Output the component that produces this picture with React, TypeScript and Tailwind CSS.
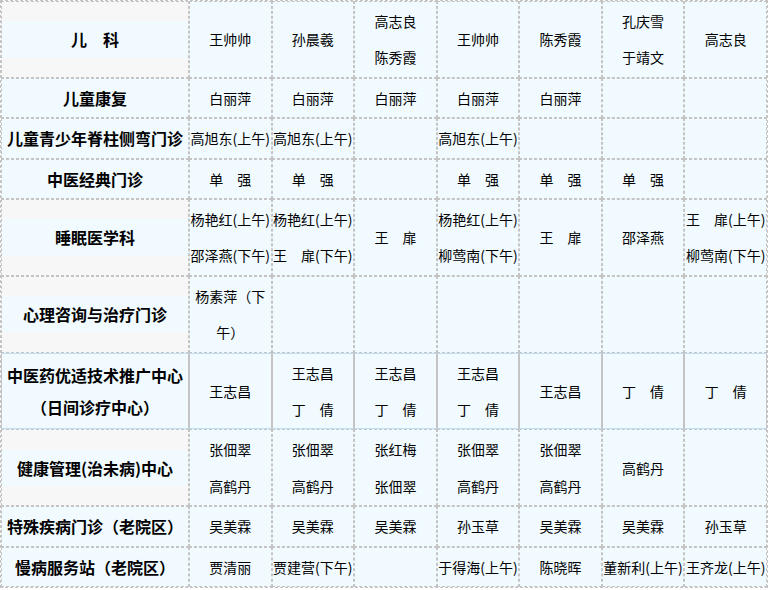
import React from "react";

type Row = {
  head: string;
  band: boolean; // first cell grey with light-blue band
  cells: string[][];
  special?: boolean;
};

const S = "　";

const rows: Row[] = [
  {
    head: `儿${S}科`,
    band: true,
    cells: [["王帅帅"], ["孙晨羲"], ["高志良", "陈秀霞"], ["王帅帅"], ["陈秀霞"], ["孔庆雪", "于靖文"], ["高志良"]],
  },
  {
    head: "儿童康复",
    band: false,
    cells: [["白丽萍"], ["白丽萍"], ["白丽萍"], ["白丽萍"], ["白丽萍"], [], []],
  },
  {
    head: "儿童青少年脊柱侧弯门诊",
    band: false,
    cells: [["高旭东(上午)"], ["高旭东(上午)"], [], ["高旭东(上午)"], [], [], []],
  },
  {
    head: "中医经典门诊",
    band: false,
    cells: [[`单${S}强`], [`单${S}强`], [], [`单${S}强`], [`单${S}强`], [`单${S}强`], []],
  },
  {
    head: "睡眠医学科",
    band: true,
    cells: [
      ["杨艳红(上午)", "邵泽燕(下午)"],
      ["杨艳红(上午)", `王${S}扉(下午)`],
      [`王${S}扉`],
      ["杨艳红(上午)", "柳莺南(下午)"],
      [`王${S}扉`],
      ["邵泽燕"],
      [`王${S}扉(上午)`, "柳莺南(下午)"],
    ],
  },
  {
    head: "心理咨询与治疗门诊",
    band: true,
    cells: [["杨素萍（下", "午）"], [], [], [], [], [], []],
  },
  {
    head: "中医药优适技术推广中心（日间诊疗中心）",
    band: false,
    special: true,
    cells: [
      ["王志昌"],
      ["王志昌", `丁${S}倩`],
      ["王志昌", `丁${S}倩`],
      ["王志昌", `丁${S}倩`],
      ["王志昌"],
      [`丁${S}倩`],
      [`丁${S}倩`],
    ],
  },
  {
    head: "健康管理(治未病)中心",
    band: true,
    cells: [
      ["张佃翠", "高鹤丹"],
      ["张佃翠", "高鹤丹"],
      ["张红梅", "张佃翠"],
      ["张佃翠", "高鹤丹"],
      ["张佃翠", "高鹤丹"],
      ["高鹤丹"],
      [],
    ],
  },
  {
    head: "特殊疾病门诊（老院区）",
    band: false,
    cells: [["吴美霖"], ["吴美霖"], ["吴美霖"], ["孙玉草"], ["吴美霖"], ["吴美霖"], ["孙玉草"]],
  },
  {
    head: "慢病服务站（老院区）",
    band: false,
    cells: [["贾清丽"], ["贾建营(下午)"], [], ["于得海(上午)"], ["陈晓晖"], ["董新利(上午)"], ["王齐龙(上午)"]],
  },
];

export default function App() {
  const font = { fontFamily: '"Noto Sans CJK SC", "Noto Sans", sans-serif' };
  return (
    <div className="w-[769px] h-[590px] bg-white overflow-hidden" style={font}>
      <table className="w-[768px] table-fixed border-separate border-spacing-0 border border-dashed border-[#c4c4c4] text-black">
        <colgroup>
          <col className="w-[188px]" />
          <col />
          <col />
          <col />
          <col />
          <col />
          <col />
          <col />
        </colgroup>
        <tbody>
          {rows.map((r, i) => {
            const sp = r.special;
            const bd = "border border-dashed border-[#c4c4c4]";
            const spb = sp ? "border-t-[#bfdff5] border-b-[#bfdff5] border-solid" : "";
            return (
              <tr key={i}>
                <td
                  className={`${bd} ${spb} p-0 py-px text-center align-middle ${
                    r.band ? "bg-[#f7f7f7]" : "bg-[#f0faff]"
                  }`}
                >
                  {sp ? (
                    <p className="text-[16px] font-bold leading-[32px] px-1">
                      中医药优适技术推广中心
                      <br />
                      （日间诊疗中心）
                    </p>
                  ) : (
                    <p className="bg-[#f0faff] text-[16px] font-bold leading-[36.4px] whitespace-nowrap">
                      {r.head}
                    </p>
                  )}
                </td>
                {r.cells.map((c, j) => (
                  <td
                    key={j}
                    className={`${bd} ${spb} bg-[#f0faff] p-0 py-px text-center align-middle text-[14px] leading-[36.4px] whitespace-nowrap`}
                  >
                    {c.map((t, k) => (
                      <div key={k}>{t}</div>
                    ))}
                  </td>
                ))}
              </tr>
            );
          })}
        </tbody>
      </table>
    </div>
  );
}
